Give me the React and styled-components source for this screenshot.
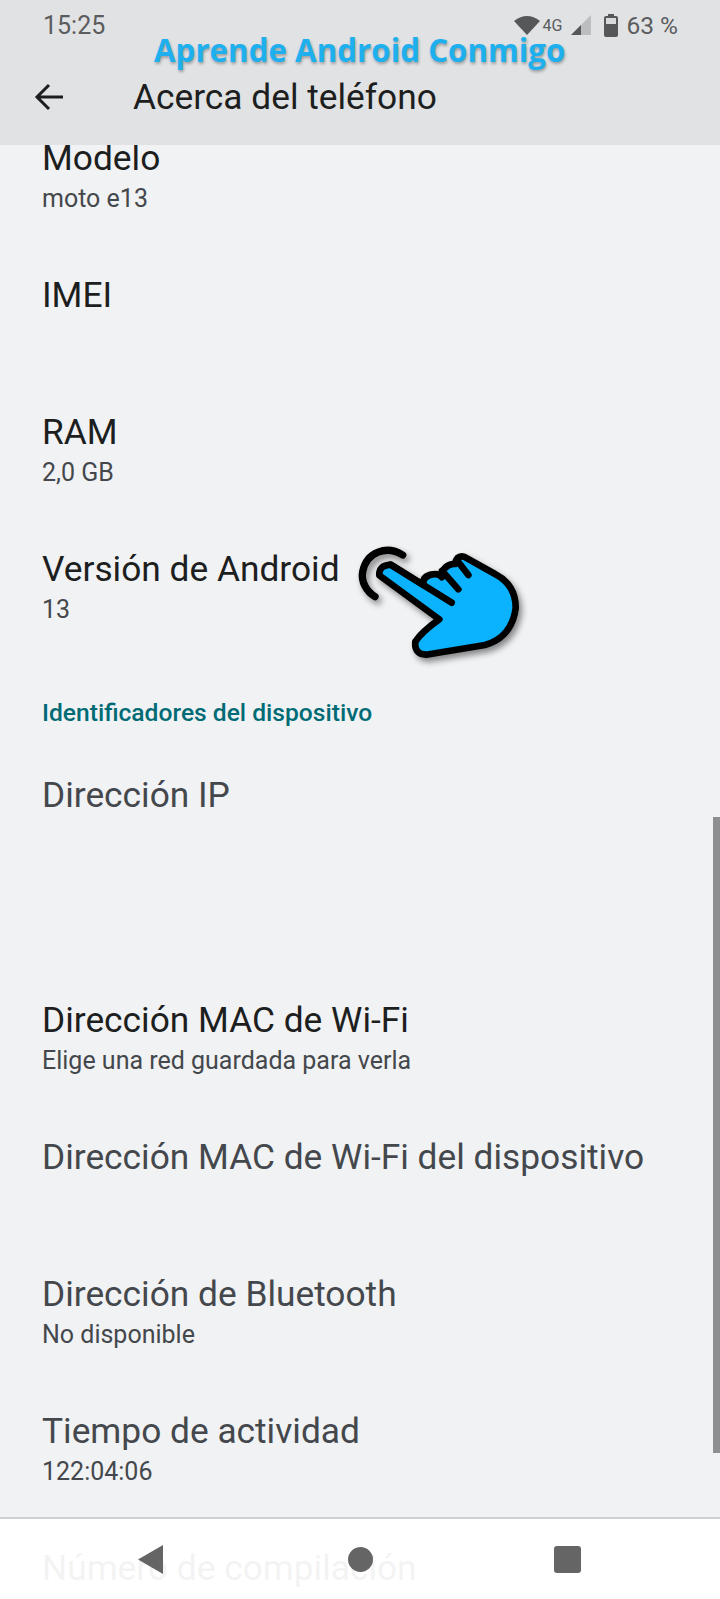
import styled, { createGlobalStyle } from "styled-components";

const rows = [
    { title: "Modelo", summary: "moto e13" },
    { title: "IMEI" },
    { title: "RAM", summary: "2,0 GB" },
    { title: "Versión de Android", summary: "13" },
];

const deviceRows = [
    { title: "Dirección IP", off: true, tall: true },
    { title: "Dirección MAC de Wi-Fi", summary: "Elige una red guardada para verla" },
    { title: "Dirección MAC de Wi-Fi del dispositivo", off: true },
    { title: "Dirección de Bluetooth", summary: "No disponible", off: true },
    { title: "Tiempo de actividad", summary: "122:04:06", off: true },
    { title: "Número de compilación" },
];

function Row({ title, summary, off, tall }) {
    return (
        <RowBox $tall={tall}>
            <Title $off={off}>{title}</Title>
            {summary && <Summary>{summary}</Summary>}
        </RowBox>
    );
}

function HandIcon() {
    return (
        <Hand viewBox="0 0 600 420">
            <path d="M188 75 C140 45 80 65 68 125 C62 155 80 185 105 200" fill="none" stroke="#000" strokeWidth="22" strokeLinecap="round" />
            <path
                d="M118 136 Q116 106 152 104 L250 165 Q246 138 278 133 Q298 130 306 142 Q306 108 338 102 L345 102 Q350 76 372 80 L465 132 Q528 165 527 235 Q515 322 435 345 L258 374 Q222 372 226 335 Q245 306 298 268 Z"
                fill="#0bb2fd"
                stroke="#000"
                strokeWidth="20"
                strokeLinejoin="round"
            />
            <path d="M152 104 L335 218 M306 122 L355 178 M352 92 L385 135" fill="none" stroke="#000" strokeWidth="20" strokeLinecap="round" />
        </Hand>
    );
}

export default function App() {
    return (
        <Screen>
            <GlobalStyle />
            <Header>
                <StatusBar>
                    <span>15:25</span>
                    <StatusIcons>
                        <svg width="26" height="20" viewBox="0 0 26 20">
                            <path d="M0 6 Q13 -4 26 6 L13 20 Z" fill="#555759" />
                        </svg>
                        <NetLabel>4G</NetLabel>
                        <SignalIcon width="20" height="20" viewBox="0 0 20 20">
                            <path d="M20 0 V20 H0 Z" fill="#bcbdbe" />
                            <path d="M10 10 V20 H0 Z" fill="#555759" />
                        </SignalIcon>
                        <BatteryIcon width="14" height="23" viewBox="0 0 14 23">
                            <path d="M4 0 H10 V2 H12 Q14 2 14 4 V21 Q14 23 12 23 H2 Q0 23 0 21 V4 Q0 2 2 2 H4 Z" fill="#555759" />
                            <rect x="2" y="4" width="10" height="6" fill="#d8d9da" />
                        </BatteryIcon>
                        <BatteryText>63 %</BatteryText>
                    </StatusIcons>
                </StatusBar>
                <Toolbar>
                    <svg width="32" height="32" viewBox="0 0 32 32">
                        <path d="M29 16 H4 M15 4 L3 16 L15 28" fill="none" stroke="#1c1e20" strokeWidth="3" />
                    </svg>
                    <PageTitle>Acerca del teléfono</PageTitle>
                </Toolbar>
            </Header>
            <Watermark>Aprende Android Conmigo</Watermark>
            <List>
                {rows.map((row) => (
                    <Row key={row.title} {...row} />
                ))}
                <SectionTitle>Identificadores del dispositivo</SectionTitle>
                {deviceRows.map((row) => (
                    <Row key={row.title} {...row} />
                ))}
            </List>
            <HandIcon />
            <ScrollThumb />
            <NavBar>
                <svg width="25" height="29" viewBox="0 0 25 29">
                    <path d="M25 0 V29 L0 14.5 Z" fill="#656565" />
                </svg>
                <HomeIcon width="25" height="25" viewBox="0 0 25 25">
                    <circle cx="12.5" cy="12.5" r="12.5" fill="#656565" />
                </HomeIcon>
                <svg width="27" height="27" viewBox="0 0 27 27">
                    <rect width="27" height="27" rx="3" fill="#656565" />
                </svg>
            </NavBar>
        </Screen>
    );
}

const GlobalStyle = createGlobalStyle`
    body {
        margin: 0;
        background: #f1f2f4;
    }
`;

const Screen = styled.div`
    position: relative;
    width: 720px;
    height: 1599px;
    overflow: hidden;
    background: #f1f2f4;
    font-family: Roboto, "Liberation Sans", sans-serif;
`;

const Header = styled.header`
    position: relative;
    z-index: 1;
    height: 145px;
    padding: 10px 42px 0 34px;
    box-sizing: border-box;
    background: #e1e2e3;
`;

const StatusBar = styled.div`
    display: flex;
    justify-content: space-between;
    align-items: center;
    height: 30px;
    padding-left: 9px;
    font-size: 25px;
    color: #5a5c5e;
`;

const StatusIcons = styled.div`
    display: flex;
    align-items: center;
`;

const NetLabel = styled.span`
    margin-left: 3px;
    font-size: 16px;
`;

const SignalIcon = styled.svg`
    margin-left: 9px;
`;

const BatteryIcon = styled.svg`
    margin-left: 13px;
`;

const BatteryText = styled.span`
    margin-left: 8px;
    font-size: 24.5px;
`;

const Toolbar = styled.div`
    display: flex;
    align-items: center;
    gap: 67px;
    margin-top: 35px;
    height: 44px;
`;

const PageTitle = styled.h1`
    margin: 0;
    font-size: 35.3px;
    font-weight: 400;
    color: #1c1e20;
`;

const Watermark = styled.div`
    position: absolute;
    z-index: 2;
    top: 35px;
    left: 154px;
    font-family: "Open Sans", sans-serif;
    font-size: 31.3px;
    font-weight: 700;
    line-height: 30px;
    color: #1eb0ee;
    text-shadow: 1px 2px 3px rgba(0, 0, 0, 0.3);
`;

const List = styled.main`
    margin-top: -6px;
`;

const RowBox = styled.div`
    height: ${(p) => (p.$tall ? 225 : 137)}px;
    padding: 0 42px;
    box-sizing: border-box;
`;

const Title = styled.div`
    height: 38px;
    line-height: 38px;
    font-size: 35.3px;
    color: ${(p) => (p.$off ? "#44484c" : "#1c1e20")};
    white-space: nowrap;
`;

const Summary = styled.div`
    margin-top: 7px;
    font-size: 25px;
    line-height: 30px;
    color: #44484c;
`;

const SectionTitle = styled.h2`
    margin: 0;
    height: 79px;
    padding: 10px 42px 0;
    font-size: 24.6px;
    line-height: 32px;
    font-weight: 500;
    color: #006b75;
`;

const Hand = styled.svg`
    position: absolute;
    left: 340px;
    top: 530px;
    width: 200px;
    height: 140px;
    filter: drop-shadow(3px 4px 3px rgba(0, 0, 0, 0.45));
`;

const ScrollThumb = styled.div`
    position: absolute;
    right: 0;
    top: 817px;
    width: 7px;
    height: 636px;
    background: #8d8f91;
`;

const NavBar = styled.nav`
    position: absolute;
    left: 0;
    right: 0;
    bottom: 0;
    height: 82px;
    box-sizing: border-box;
    border-top: 2px solid #cfcfcf;
    background: rgba(255, 255, 255, 0.95);
    display: flex;
    justify-content: space-between;
    align-items: center;
    padding: 0 139px 0 138px;
`;

const HomeIcon = styled.svg`
    margin-left: 4px;
`;
